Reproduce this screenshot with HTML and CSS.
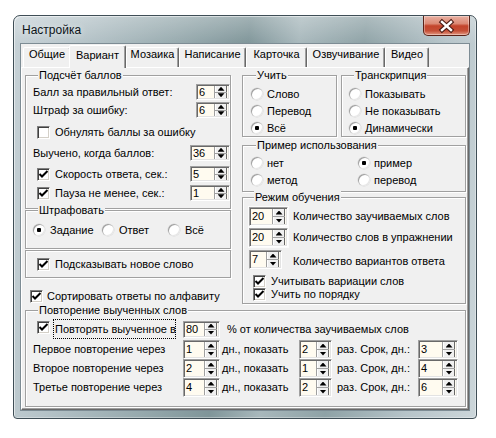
FILE: index.html
```html
<!DOCTYPE html>
<html lang="ru">
<head>
<meta charset="utf-8">
<title>Настройка</title>
<link rel="stylesheet" href="styles.css">
</head>
<body>
<div class="window">
  <div class="titlebar">
    <span class="title">Настройка</span>
    <span class="close"><svg width="45" height="18" viewBox="0 0 45 18"><path d="M18 5l9 8M27 5l-9 8" stroke="#4a1a12" stroke-width="4.6" stroke-linecap="square"/><path d="M18 5l9 8M27 5l-9 8" stroke="#fff" stroke-width="2.4" stroke-linecap="square"/></svg></span>
  </div>
  <div class="client">
    <div class="tabs">
      <span class="tab w48">Общие</span>
      <span class="tab sel">Вариант</span>
      <span class="tab w53">Мозаика</span>
      <span class="tab w67">Написание</span>
      <span class="tab w61">Карточка</span>
      <span class="tab w78">Озвучивание</span>
      <span class="tab w44">Видео</span>
    </div>
    <div class="panel">
      <div class="cols">
        <div class="col">
          <div class="group g-score">
            <span class="legend">Подсчёт баллов</span>
            <div class="frow"><span>Балл за правильный ответ:</span><span class="spin w34 h16"><span class="val">6</span><span class="btns"><i class="up"></i><i class="dn"></i></span></span></div>
            <div class="frow mt2"><span>Штраф за ошибку:</span><span class="spin w34 h16"><span class="val">6</span><span class="btns"><i class="up"></i><i class="dn"></i></span></span></div>
            <div class="frow mt6 pl4"><span class="chk"><span class="cb"></span>Обнулять баллы за ошибку</span></div>
            <div class="frow mt5"><span>Выучено, когда баллов:</span><span class="spin w40 h16"><span class="val">36</span><span class="btns"><i class="up"></i><i class="dn"></i></span></span></div>
            <div class="frow mt5 pl4"><span class="chk"><span class="cb"><svg width="11" height="11" viewBox="0 0 11 11"><path d="M1.5 5l2.5 2.5 5.5-5.5" stroke="#000" stroke-width="2" fill="none"/></svg></span>Скорость ответа, сек.:</span><span class="spin w40 h16"><span class="val">5</span><span class="btns"><i class="up"></i><i class="dn"></i></span></span></div>
            <div class="frow mt3 pl4"><span class="chk"><span class="cb"><svg width="11" height="11" viewBox="0 0 11 11"><path d="M1.5 5l2.5 2.5 5.5-5.5" stroke="#000" stroke-width="2" fill="none"/></svg></span>Пауза не менее, сек.:</span><span class="spin w40 h16"><span class="val">1</span><span class="btns"><i class="up"></i><i class="dn"></i></span></span></div>
          </div>
          <div class="group g-fine">
            <span class="legend">Штрафовать</span>
            <div class="frow">
              <span class="radio w69"><span class="rb on"></span>Задание</span>
              <span class="radio w66"><span class="rb"></span>Ответ</span>
              <span class="radio grow"><span class="rb"></span>Всё</span>
            </div>
          </div>
          <div class="group g-hint">
            <div class="frow"><span class="chk"><span class="cb"><svg width="11" height="11" viewBox="0 0 11 11"><path d="M1.5 5l2.5 2.5 5.5-5.5" stroke="#000" stroke-width="2" fill="none"/></svg></span>Подсказывать новое слово</span></div>
          </div>
          <div class="frow sortrow"><span class="chk gap4"><span class="cb"><svg width="11" height="11" viewBox="0 0 11 11"><path d="M1.5 5l2.5 2.5 5.5-5.5" stroke="#000" stroke-width="2" fill="none"/></svg></span>Сортировать ответы по алфавиту</span></div>
        </div>

        <div class="col">
          <div class="toprow">
            <div class="group g-learn">
              <span class="legend">Учить</span>
              <div class="rrow"><span class="radio"><span class="rb"></span>Слово</span></div>
              <div class="rrow"><span class="radio"><span class="rb"></span>Перевод</span></div>
              <div class="rrow"><span class="radio"><span class="rb on"></span>Всё</span></div>
            </div>
            <div class="group g-trans">
              <span class="legend">Транскрипция</span>
              <div class="rrow"><span class="radio"><span class="rb"></span>Показывать</span></div>
              <div class="rrow"><span class="radio"><span class="rb"></span>Не показывать</span></div>
              <div class="rrow"><span class="radio"><span class="rb on"></span>Динамически</span></div>
            </div>
          </div>
          <div class="group g-example">
            <span class="legend">Пример использования</span>
            <div class="rrow"><span class="radio w107"><span class="rb"></span>нет</span><span class="radio"><span class="rb on"></span>пример</span></div>
            <div class="rrow"><span class="radio w107"><span class="rb"></span>метод</span><span class="radio"><span class="rb"></span>перевод</span></div>
          </div>
          <div class="group g-mode">
            <span class="legend">Режим обучения</span>
            <div class="mrow"><span class="spinwrap"><span class="spin w39 h19 framed"><span class="val">20</span><span class="btns"><i class="up"></i><i class="dn"></i></span></span></span><span>Количество заучиваемых слов</span></div>
            <div class="mrow mt2"><span class="spinwrap"><span class="spin w39 h19 framed"><span class="val">20</span><span class="btns"><i class="up"></i><i class="dn"></i></span></span></span><span>Количество слов в упражнении</span></div>
            <div class="mrow mt3"><span class="spinwrap"><span class="spin w33 h19"><span class="val">7</span><span class="btns"><i class="up"></i><i class="dn"></i></span></span></span><span class="lowtext">Количество вариантов ответа</span></div>
            <div class="crow mt6"><span class="chk"><span class="cb"><svg width="11" height="11" viewBox="0 0 11 11"><path d="M1.5 5l2.5 2.5 5.5-5.5" stroke="#000" stroke-width="2" fill="none"/></svg></span>Учитывать вариации слов</span></div>
            <div class="crow"><span class="chk"><span class="cb"><svg width="11" height="11" viewBox="0 0 11 11"><path d="M1.5 5l2.5 2.5 5.5-5.5" stroke="#000" stroke-width="2" fill="none"/></svg></span>Учить по порядку</span></div>
          </div>
        </div>
      </div>

      <div class="group g-repeat">
        <span class="legend">Повторение выученных слов</span>
        <div class="prow1">
          <span class="cb up2"><svg width="11" height="11" viewBox="0 0 11 11"><path d="M1.5 5l2.5 2.5 5.5-5.5" stroke="#000" stroke-width="2" fill="none"/></svg></span>
          <span class="focus">Повторять выученное в</span>
          <span class="spin w37 h17 ml7"><span class="val">80</span><span class="btns"><i class="up"></i><i class="dn"></i></span></span>
          <span class="ml7">% от количества заучиваемых слов</span>
        </div>
        <div class="prow mt1">
          <span class="lab150">Первое повторение через</span>
          <span class="spin w37 h19"><span class="val">1</span><span class="btns"><i class="up"></i><i class="dn"></i></span></span>
          <span class="lab77">дн., показать</span>
          <span class="spin w33 h19"><span class="val">2</span><span class="btns"><i class="up"></i><i class="dn"></i></span></span>
          <span class="lab81">раз. Срок, дн.:</span>
          <span class="spin w40 h19"><span class="val">3</span><span class="btns"><i class="up"></i><i class="dn"></i></span></span>
        </div>
        <div class="prow">
          <span class="lab150">Второе повторение через</span>
          <span class="spin w37 h19"><span class="val">2</span><span class="btns"><i class="up"></i><i class="dn"></i></span></span>
          <span class="lab77">дн., показать</span>
          <span class="spin w33 h19"><span class="val">1</span><span class="btns"><i class="up"></i><i class="dn"></i></span></span>
          <span class="lab81">раз. Срок, дн.:</span>
          <span class="spin w40 h19"><span class="val">4</span><span class="btns"><i class="up"></i><i class="dn"></i></span></span>
        </div>
        <div class="prow">
          <span class="lab150">Третье повторение через</span>
          <span class="spin w37 h19"><span class="val">4</span><span class="btns"><i class="up"></i><i class="dn"></i></span></span>
          <span class="lab77">дн., показать</span>
          <span class="spin w33 h19"><span class="val">2</span><span class="btns"><i class="up"></i><i class="dn"></i></span></span>
          <span class="lab81">раз. Срок, дн.:</span>
          <span class="spin w40 h19"><span class="val">6</span><span class="btns"><i class="up"></i><i class="dn"></i></span></span>
        </div>
      </div>
    </div>
  </div>
</div>
</body>
</html>
```

FILE: styles.css
```css
* { box-sizing: border-box; }
html, body { margin: 0; background: #fff; }
body {
  font: 11px/13px "Liberation Sans", Arial, sans-serif;
  color: #000;
}

/* window frame */
.window {
  width: 464px;
  height: 404px;
  margin: 15px 0 0 13px;
  border: 1px solid #3f4e56;
  border-radius: 7px 7px 4px 4px;
  padding: 0 6px 7px;
  background:
    linear-gradient(180deg, rgba(255,255,255,.28), rgba(255,255,255,0) 28px),
    linear-gradient(96deg, #c6d1d6 0%, #b5c3c8 14%, #97aaae 33%, #7f9599 47%, #a8b8bc 57%, #8ea2a6 70%, #b6c4c9 86%, #ccd6da 100%);
  box-shadow: inset 1px 1px 0 rgba(255,255,255,.55), inset -1px -1px 0 rgba(255,255,255,.35);
  display: flex;
  flex-direction: column;
}
.titlebar {
  height: 27px;
  display: flex;
  justify-content: space-between;
  align-items: flex-start;
}
.title {
  font: 12px/15px "Liberation Sans", Arial, sans-serif;
  margin: 7px 0 0 2px;
  color: #0c1418;
  text-shadow: 0 0 6px rgba(255,255,255,.8);
}
.close {
  width: 47px;
  height: 20px;
  border: 1px solid #5b2217;
  border-top: 0;
  border-radius: 0 0 5px 5px;
  background: linear-gradient(180deg, #e9b0a2 0%, #dc8a75 40%, #c3442b 52%, #c54f36 78%, #e39a83 100%);
  box-shadow: inset 0 0 0 1px rgba(255,255,255,.35);
  display: flex;
  align-items: center;
  justify-content: center;
}
.close svg { display: block; }

/* client area */
.client {
  height: 368px;
  border: 1px solid #7d8c94;
  background: #f0f0f0;
}
.tabs {
  height: 22px;
  margin-top: 1px;
  padding-left: 2px;
  display: flex;
  align-items: flex-end;
}
.tab {
  height: 20px;
  border: 1px solid;
  border-bottom: 0;
  border-color: #fff #696969 transparent #fff;
  box-shadow: inset -1px 0 0 #a0a0a0;
  border-radius: 2px 2px 0 0;
  text-align: center;
  line-height: 13px;
  padding-top: 0;
  background: #f0f0f0;
  white-space: nowrap;
}
.tab.sel {
  width: 57px;
  height: 23px;
  margin: 0 0 -1px -2px;
  padding-top: 3px;
  position: relative;
  z-index: 1;
}
.panel {
  height: 343px;
  border: 1px solid;
  border-color: #fff #696969 #696969 #fff;
  box-shadow: inset -1px -1px 0 #a0a0a0;
  padding: 7px 0 0 3px;
}
.cols {
  display: grid;
  grid-template-columns: 206px 224px;
  column-gap: 11px;
}

/* group boxes */
.group {
  --pt: 0px;
  border: 1px solid #a0a0a0;
  box-shadow: 1px 1px 0 #fff, inset 1px 1px 0 #fff;
  padding-top: var(--pt);
}
.legend {
  display: table;
  height: 13px;
  line-height: 13px;
  margin: calc(-7px - var(--pt)) 0 0 5px;
  padding: 0 1px;
  background: #f0f0f0;
  white-space: nowrap;
}
.legend + * { margin-top: calc(var(--pt) - 6px); }
.g-score { --pt: 8px; height: 134px; padding-left: 7px; }
.g-fine { --pt: 11px; height: 39px; margin-top: 1px; padding-left: 7px; }
.g-hint { --pt: 5px; height: 28px; margin-top: 1px; padding-left: 11px; }
.sortrow { margin-top: 10px; padding-left: 5px; }

.toprow { display: flex; gap: 4px; }
.g-learn { --pt: 10px; width: 95px; height: 62px; padding-left: 8px; }
.g-trans { --pt: 10px; width: 125px; height: 62px; padding-left: 7px; }
.g-example { --pt: 9px; height: 47px; margin-top: 8px; padding-left: 8px; }
.g-mode { --pt: 9px; height: 107px; margin-top: 5px; padding-left: 6px; }
.g-repeat { --pt: 8px; width: 441px; height: 97px; margin-top: 6px; padding-left: 7px; }

/* rows */
.frow {
  height: 16px;
  display: flex;
  align-items: center;
  justify-content: space-between;
  white-space: nowrap;
}
.rrow {
  height: 16px;
  display: flex;
  align-items: center;
  white-space: nowrap;
}
.rrow + .rrow { margin-top: 1px; }
.mrow {
  height: 19px;
  display: flex;
  align-items: center;
  white-space: nowrap;
}
.spinwrap { width: 44px; display: flex; }
.lowtext { padding-top: 3px; }
.crow {
  height: 13px;
  margin-left: 4px;
  display: flex;
  align-items: center;
  white-space: nowrap;
}
.prow1 {
  height: 20px;
  padding-left: 4px;
  display: flex;
  align-items: center;
  white-space: nowrap;
}
.prow {
  height: 19px;
  display: flex;
  align-items: center;
  white-space: nowrap;
}
.lab150 { width: 150px; }
.lab77 { width: 77px; margin-left: 2px; }
.lab81 { width: 81px; margin-left: 5px; }
.focus {
  width: 123px;
  height: 20px;
  margin-left: 3px;
  padding: 3px 0 0 1px;
  border: 1px dotted #000;
}
.grow { flex: 1; }
.frow .radio.w69, .frow .radio.w66 { flex: none; }
.mt1 { margin-top: 1px; }
.mt2 { margin-top: 2px; }
.mt3 { margin-top: 3px; }
.mt5 { margin-top: 5px; }
.mt6 { margin-top: 6px; }
.pl4 { padding-left: 4px; }
.ml7 { margin-left: 7px; }
.up2 { margin-bottom: 3px; }

/* widths */
.w33 { width: 33px; }
.w34 { width: 34px; }
.w37 { width: 37px; }
.w39 { width: 39px; }
.w40 { width: 40px; }
.w44 { width: 44px; }
.w48 { width: 48px; }
.w53 { width: 53px; }
.w61 { width: 61px; }
.w66 { width: 66px; }
.w67 { width: 67px; }
.w69 { width: 69px; }
.w78 { width: 78px; }
.w107 { width: 107px; }
.h16 { height: 16px; }
.h17 { height: 17px; }
.h19 { height: 19px; }

/* checkbox */
.chk { display: inline-flex; align-items: center; gap: 5px; }
.chk.gap4 { gap: 4px; }
.cb {
  width: 13px;
  height: 13px;
  flex: none;
  display: inline-flex;
  align-items: center;
  justify-content: center;
  background: #fff;
  border: 1px solid;
  border-color: #808080 #fff #fff #808080;
  box-shadow: inset 1px 1px 0 #404040, inset -1px -1px 0 #d4d0c8;
}
.cb svg { display: block; }

/* radio */
.radio { display: inline-flex; align-items: center; gap: 4px; }
.g-fine .radio { gap: 5px; }
.rb {
  width: 12px;
  height: 12px;
  flex: none;
  border-radius: 50%;
  background: #fff;
  box-shadow: inset 1px 1px 0 #a0a0a0, inset -1px -1px 0 #e6e6e6, 0 0 0 .5px #d8d8d8;
  display: inline-flex;
  align-items: center;
  justify-content: center;
}
.rb.on::after {
  content: "";
  width: 4px;
  height: 4px;
  border-radius: 1px;
  background: #000;
}

/* spin edit */
.spin {
  display: inline-flex;
  flex: none;
  border: 1px solid;
  border-color: #a0a0a0 #fff #fff #a0a0a0;
  box-shadow: inset 1px 1px 0 #696969, inset -1px -1px 0 #e3e3e3;
  background: #fffbf0;
  padding: 1px 2px 1px 1px;
}
.spin.framed { outline: 1px solid #fbfbfb; }
.spin .val {
  flex: 1;
  align-self: center;
  padding-left: 1px;
  line-height: 13px;
}
.spin .btns {
  width: 13px;
  display: flex;
  flex-direction: column;
  background: #f0f0f0;
  border-left: 1px solid #a0a0a0;
  box-shadow: inset 1px 0 0 #fff, inset -1px 0 0 #696969;
}
.spin .btns i {
  flex: 1;
  display: flex;
  align-items: center;
  justify-content: center;
}
.spin .btns i.up { border-bottom: 1px solid #a0a0a0; }
.spin .btns i::after {
  content: "";
  width: 7px;
  height: 4px;
  background: #000;
}
.spin .btns i.up::after { clip-path: polygon(50% 0, 100% 100%, 0 100%); }
.spin .btns i.dn::after { clip-path: polygon(0 0, 100% 0, 50% 100%); }
```
